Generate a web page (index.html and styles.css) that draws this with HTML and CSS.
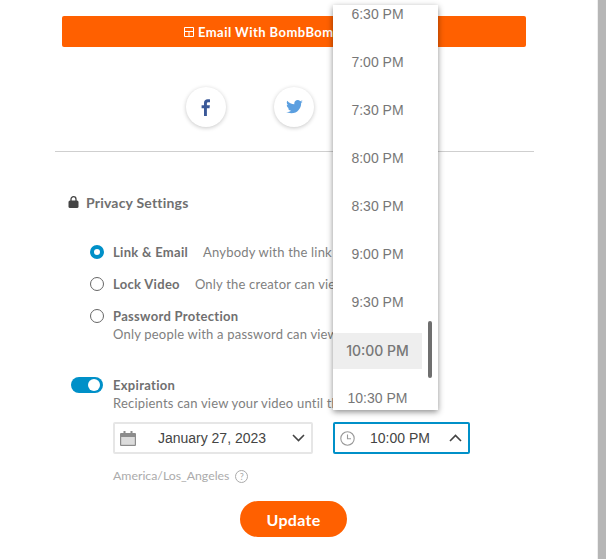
FILE: index.html
```html
<!DOCTYPE html>
<html lang="en">
<head>
<meta charset="utf-8">
<title>Privacy Settings</title>
<link rel="stylesheet" href="styles.css">
</head>
<body>
<div class="page">
  <main class="panel">
    <a class="email-btn">
      <svg class="email-icon" width="10" height="10" viewBox="0 0 10 10"><path d="M.5.5h9v9h-9zM.5 4.500h9M5 4.500v5" fill="none" stroke="#fff" stroke-width="1"/></svg>
      <span>Email With BombBomb</span>
    </a>
    <div class="social">
      <span class="social-btn">
        <svg width="10" height="17" viewBox="0 0 10 17"><path d="M3 17V9.300H.6V6.200H3V4.100C3 1.500 4.500.3 6.700.3c1.100 0 2 .1 2.300.1v2.900H7.400c-1.200 0-1.500.6-1.500 1.400v1.500h3l-.4 3.100H5.900V17z" fill="#3b5998"/></svg>
      </span>
      <span class="social-btn">
        <svg width="17" height="14" viewBox="0 0 24 20"><path d="M24 2.400c-.9.4-1.800.7-2.800.8 1-.6 1.800-1.600 2.200-2.700-1 .6-2 1-3.100 1.200C19.300.7 18 0 16.600 0c-2.700 0-4.900 2.200-4.900 4.900 0 .4 0 .8.100 1.100C7.700 5.800 4.100 3.900 1.700.9c-.4.700-.7 1.600-.7 2.500 0 1.700.9 3.200 2.200 4.100-.8 0-1.600-.2-2.200-.6v.1c0 2.400 1.700 4.400 3.900 4.800-.4.1-.8.2-1.300.2-.3 0-.6 0-.9-.1.6 2 2.400 3.400 4.600 3.400-1.700 1.300-3.800 2.100-6.100 2.100-.4 0-.8 0-1.200-.1C2.200 18.300 4.800 19 7.500 19c9.100 0 14-7.500 14-14v-.6c1-.7 1.800-1.600 2.500-2z" fill="#5b9fe0"/></svg>
      </span>
    </div>
    <hr class="divider">
    <h2 class="privacy-title">
      <svg class="lock" width="11" height="12" viewBox="0 0 11 12"><path d="M3 5V3.200a2.500 2.500 0 0 1 5 0V5" fill="none" stroke="#444" stroke-width="1.300"/><rect x=".5" y="4.500" width="10" height="7.500" rx="1.500" fill="#444"/></svg>
      <span>Privacy Settings</span>
    </h2>
    <ul class="options">
      <li class="option">
        <span class="radio radio-on"></span>
        <div><b>Link &amp; Email</b><span class="gap">Anybody with the link can view</span></div>
      </li>
      <li class="option">
        <span class="radio"></span>
        <div><b>Lock Video</b><span class="gap">Only the creator can view this video</span></div>
      </li>
      <li class="option option-tall">
        <span class="radio"></span>
        <div><b>Password Protection</b><p class="desc">Only people with a password can view this video</p></div>
      </li>
    </ul>
    <section class="expiry">
      <span class="toggle"><span class="knob"></span></span>
      <div class="expiry-body">
        <b>Expiration</b>
        <p class="desc">Recipients can view your video until the expiration</p>
        <div class="pickers">
          <div class="picker picker-date">
            <svg width="16" height="15" viewBox="0 0 16 15"><path d="M3.500 0h2v2h5V0h2v2h2.500a1 1 0 0 1 1 1v11a1 1 0 0 1-1 1H1a1 1 0 0 1-1-1V3a1 1 0 0 1 1-1h2.500z" fill="#8c8c8c"/><rect x="1.200" y="6" width="13.600" height="7.800" fill="#dcdcdc"/></svg>
            <span class="picker-text">January 27, 2023</span>
            <svg width="13" height="8" viewBox="0 0 13 8"><path d="M1 1l5.500 5.500L12 1" fill="none" stroke="#444" stroke-width="1.600"/></svg>
          </div>
          <div class="picker picker-time">
            <svg width="15" height="15" viewBox="0 0 15 15"><circle cx="7.500" cy="7.500" r="6.700" fill="none" stroke="#999" stroke-width="1.100"/><path d="M7.500 3.500v4.300h3.500" fill="none" stroke="#999" stroke-width="1.100"/></svg>
            <span class="picker-text">10:00 PM</span>
            <svg width="13" height="8" viewBox="0 0 13 8"><path d="M1 7l5.500-5.500L12 7" fill="none" stroke="#444" stroke-width="1.600"/></svg>
          </div>
        </div>
        <p class="tz"><span>America/Los_Angeles</span><span class="help">?</span></p>
      </div>
    </section>
    <div class="actions"><button class="update">Update</button></div>
    <div class="menu">
      <ul class="menu-list">
        <li>6:30 PM</li>
        <li>7:00 PM</li>
        <li>7:30 PM</li>
        <li>8:00 PM</li>
        <li>8:30 PM</li>
        <li>9:00 PM</li>
        <li>9:30 PM</li>
        <li class="selected">10:00 PM</li>
        <li>10:30 PM</li>
      </ul>
      <span class="scrollthumb"></span>
    </div>
  </main>
  <aside class="scrollbar"></aside>
</div>
</body>
</html>
```

FILE: styles.css
```css
* { box-sizing: border-box; }
html, body { margin: 0; height: 100%; overflow: hidden; background: #fff; }
body { font-family: Lato, "Open Sans", sans-serif; color: #808080; font-size: 13px; letter-spacing: .2px; }
.page { display: flex; height: 559px; width: 606px; }
.panel { position: relative; flex: 1; border-right: 1px solid #eeeeee; padding: 16px 0 0 55px; }
.scrollbar { width: 8px; background: #b6b6b6; }
.email-btn { display: flex; align-items: center; gap: 4px; width: 464px; height: 31px; margin-left: 7px; padding-left: 122px; background: #ff6000; border-radius: 2px; color: #fff; font-weight: 700; font-size: 13px; letter-spacing: .45px; }
.email-icon { flex: none; }
.social { display: flex; gap: 48px; margin: 40px 0 0 131px; }
.social-btn { width: 40px; height: 40px; border-radius: 50%; background: #fff; box-shadow: 0 1px 4px rgba(0,0,0,.22); display: flex; align-items: center; justify-content: center; }
.divider { width: 479px; margin: 24px 0 0; border: 0; border-top: 1px solid #cfcfcf; }
.privacy-title { display: flex; align-items: center; gap: 7px; margin: 43px 0 0 13px; font-size: 14px; font-weight: 700; color: #707070; line-height: 16px; letter-spacing: .2px; }
.lock { margin-top: -3px; }
.options { list-style: none; margin: 32px 0 0 35px; padding: 0; }
.option { display: flex; gap: 9px; margin-bottom: 14px; white-space: nowrap; line-height: 18px; }
.option b { color: #707070; letter-spacing: .3px; }
.gap { margin-left: 15px; }
.radio { flex: none; width: 14px; height: 14px; margin-top: 2px; border: 1px solid #666; border-radius: 50%; background: #fff; }
.radio-on { border: 4px solid #0090c8; }
.desc { margin: 0; line-height: 18px; white-space: nowrap; }
.expiry { display: flex; gap: 10px; margin: 33px 0 0 16px; }
.toggle { flex: none; position: relative; width: 32px; height: 16px; border-radius: 8px; background: #0090c8; margin-top: 1px; }
.knob { position: absolute; top: 2px; right: 3px; width: 12px; height: 12px; background: #fff; border-radius: 50%; }
.expiry-body { line-height: 18px; }
.expiry-body b { color: #707070; letter-spacing: .3px; }
.pickers { display: flex; gap: 20px; margin-top: 10px; }
.picker { display: flex; align-items: center; justify-content: space-between; height: 32px; background: #fff; border-radius: 2px; padding: 0 6px 0 5px; font-family: "Liberation Sans", Arial, sans-serif; letter-spacing: 0; font-size: 14px; color: #444; }
.picker-text { margin-right: 4px; }
.picker-date { width: 200px; border: 2px solid #e6e6e6; }
.picker-time { width: 137px; border: 2px solid #0090c8; }
.tz { display: flex; align-items: center; gap: 6px; margin: 14px 0 0; font-size: 12.300px; letter-spacing: 0; color: #ababab; line-height: 16px; }
.help { width: 13px; height: 13px; border: 1px solid #ababab; border-radius: 50%; font-size: 9px; line-height: 11px; text-align: center; }
.actions { margin: 17px 0 0 185px; }
.update { width: 107px; height: 36px; border: 0; border-radius: 18px; background: #ff6000; color: #fff; font: 700 16px Lato, sans-serif; padding: 0; letter-spacing: .3px; }
.menu { position: absolute; left: 333px; top: 5px; width: 105px; height: 405px; background: #fff; overflow: hidden; box-shadow: 0 2px 6px rgba(0,0,0,.45); }
.menu-list { list-style: none; margin: -15px 0 0; padding: 0; width: 89px; }
.menu-list li { height: 48px; line-height: 48px; text-align: center; font-family: "Liberation Sans", Arial, sans-serif; letter-spacing: 0; font-size: 14px; color: #777; }
.menu-list .selected { height: 36px; line-height: 35px; margin: 7px 0 5px; font-family: Inter, sans-serif; font-weight: 500; background: #eeeeee; }
.scrollthumb { position: absolute; left: 95px; top: 316px; width: 4px; height: 57px; background: #6f6f6f; border-radius: 2px; }
```
